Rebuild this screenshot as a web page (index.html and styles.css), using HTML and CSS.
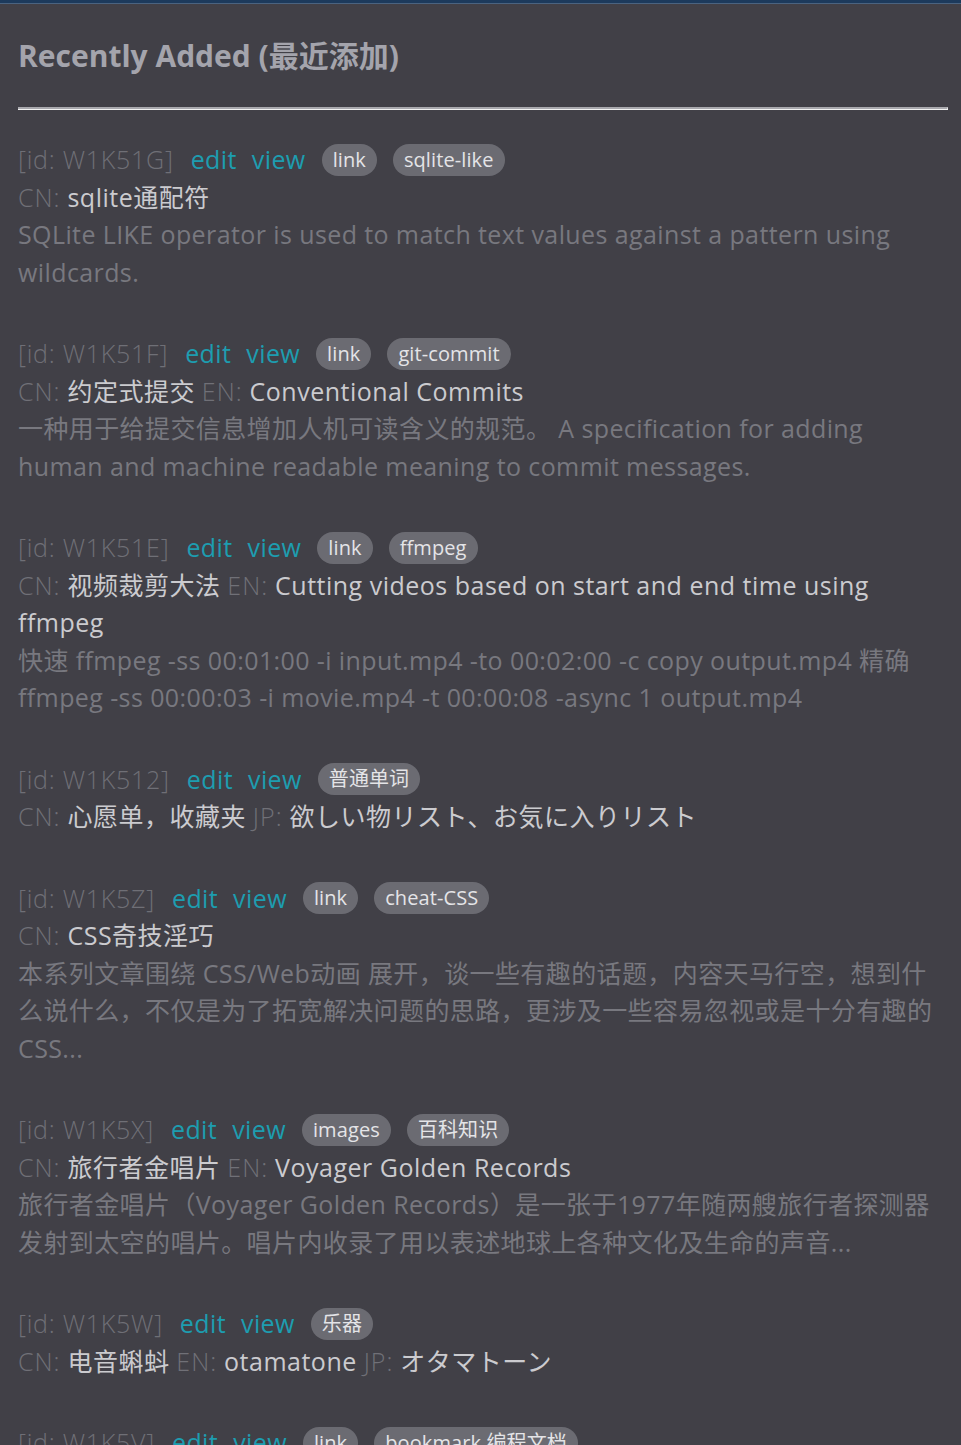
FILE: index.html
```html
<!DOCTYPE html>
<html lang="zh-CN">
<head>
<meta charset="utf-8">
<title>Recently Added</title>
<link rel="stylesheet" href="styles.css">
</head>
<body>
<div class="topbar"></div>
<main class="page">
  <h2 class="title">Recently Added (最近添加)</h2>
  <hr class="rule">
  <ul class="entries">
    <li class="entry">
      <div class="head"><span class="id">[id: W1K51G]</span><a class="act">edit</a><a class="act">view</a><span class="tag">link</span><span class="tag">sqlite-like</span></div>
      <div class="names"><span class="lab">CN:</span> <span class="val">sqlite通配符</span></div>
      <p class="desc">SQLite LIKE operator is used to match text values against a pattern using wildcards.</p>
    </li>
    <li class="entry">
      <div class="head"><span class="id">[id: W1K51F]</span><a class="act">edit</a><a class="act">view</a><span class="tag">link</span><span class="tag">git-commit</span></div>
      <div class="names"><span class="lab">CN:</span> <span class="val">约定式提交</span> <span class="lab">EN:</span> <span class="val">Conventional Commits</span></div>
      <p class="desc">一种用于给提交信息增加人机可读含义的规范。 A specification for adding human and machine readable meaning to commit messages.</p>
    </li>
    <li class="entry">
      <div class="head"><span class="id">[id: W1K51E]</span><a class="act">edit</a><a class="act">view</a><span class="tag">link</span><span class="tag">ffmpeg</span></div>
      <div class="names"><span class="lab">CN:</span> <span class="val">视频裁剪大法</span> <span class="lab">EN:</span> <span class="val">Cutting videos based on start and end time using ffmpeg</span></div>
      <p class="desc">快速 ffmpeg -ss 00:01:00 -i input.mp4 -to 00:02:00 -c copy output.mp4 精确 ffmpeg -ss 00:00:03 -i movie.mp4 -t 00:00:08 -async 1 output.mp4</p>
    </li>
    <li class="entry">
      <div class="head"><span class="id">[id: W1K512]</span><a class="act">edit</a><a class="act">view</a><span class="tag">普通单词</span></div>
      <div class="names"><span class="lab">CN:</span> <span class="val">心愿单，收藏夹</span> <span class="lab">JP:</span> <span class="val">欲しい物リスト、お気に入りリスト</span></div>
    </li>
    <li class="entry">
      <div class="head"><span class="id">[id: W1K5Z]</span><a class="act">edit</a><a class="act">view</a><span class="tag">link</span><span class="tag">cheat-CSS</span></div>
      <div class="names"><span class="lab">CN:</span> <span class="val">CSS奇技淫巧</span></div>
      <p class="desc">本系列文章围绕 CSS/Web动画 展开，谈一些有趣的话题，内容天马行空，想到什么说什么，不仅是为了拓宽解决问题的思路，更涉及一些容易忽视或是十分有趣的CSS...</p>
    </li>
    <li class="entry">
      <div class="head"><span class="id">[id: W1K5X]</span><a class="act">edit</a><a class="act">view</a><span class="tag">images</span><span class="tag">百科知识</span></div>
      <div class="names"><span class="lab">CN:</span> <span class="val">旅行者金唱片</span> <span class="lab">EN:</span> <span class="val">Voyager Golden Records</span></div>
      <p class="desc">旅行者金唱片（Voyager Golden Records）是一张于1977年随两艘旅行者探测器发射到太空的唱片。唱片内收录了用以表述地球上各种文化及生命的声音...</p>
    </li>
    <li class="entry">
      <div class="head"><span class="id">[id: W1K5W]</span><a class="act">edit</a><a class="act">view</a><span class="tag">乐器</span></div>
      <div class="names"><span class="lab">CN:</span> <span class="val">电音蝌蚪</span> <span class="lab">EN:</span> <span class="val">otamatone</span> <span class="lab">JP:</span> <span class="val">オタマトーン</span></div>
    </li>
    <li class="entry">
      <div class="head"><span class="id">[id: W1K5V]</span><a class="act">edit</a><a class="act">view</a><span class="tag">link</span><span class="tag">bookmark 编程文档</span></div>
    </li>
  </ul>
</main>
</body>
</html>
```

FILE: styles.css
```css
html, body {
  margin: 0;
  padding: 0;
}
body {
  background: #414047;
  font-family: "Open Sans", "Noto Sans CJK SC", sans-serif;
  color: #c8c8cc;
  height: 1445px;
  overflow: hidden;
}
.topbar {
  height: 3px;
  background: #1c3a5c;
  border-bottom: 1px solid #4a6380;
}
.page {
  padding: 0 13px 0 18px;
}
.title {
  margin: 0;
  padding-top: 31px;
  font-size: 30px;
  line-height: 42px;
  font-weight: 700;
  color: #a4a4ac;
}
.rule {
  margin: 30px 0 0 0;
  height: 0;
  border: 0;
  border-top: 2px solid #a9a9ae;
  border-bottom: 1px solid #f2f2f2;
  border-right: 1px solid #f2f2f2;
}
.entries {
  list-style: none;
  margin: 31px 0 0 0;
  padding: 0;
}
.entry {
  font-size: 25px;
  letter-spacing: 0.4px;
  line-height: 37.5px;
  margin-bottom: 44px;
}
.head {
  display: flex;
  align-items: center;
  gap: 15px;
  height: 37.5px;
  white-space: nowrap;
}
.id {
  color: #6f6f76;
  font-weight: 300;
  letter-spacing: 0.75px;
  margin-right: 2px;
}
.act {
  color: #1d9db0;
}
.tag {
  background: #6b6b72;
  color: #e4e4e7;
  font-size: 20px;
  letter-spacing: 0.1px;
  line-height: 32px;
  padding: 0 11px;
  border-radius: 16px;
  margin-left: 1px;
}
.names {
  color: #cbcbcf;
}
.lab {
  color: #707077;
  font-weight: 300;
  letter-spacing: 1px;
}
.val {
  letter-spacing: 0.5px;
}
.desc {
  margin: 0;
  color: #78787f;
}
```
